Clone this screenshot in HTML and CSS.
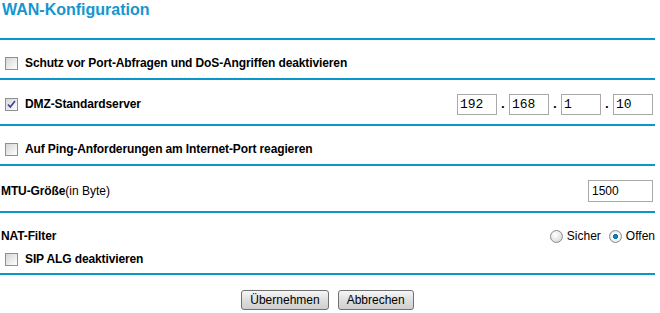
FILE: index.html
```html
<!DOCTYPE html>
<html>
<head>
<meta charset="utf-8">
<link rel="stylesheet" href="styles.css">
</head>
<body class="in_body">
  <div class="page">
    <div class="title">WAN-Konfiguration</div>

    <div class="row r1">
      <label class="lab"><span class="cb"></span>Schutz vor Port-Abfragen und DoS-Angriffen deaktivieren</label>
    </div>

    <div class="row r2">
      <label class="lab"><span class="cb on"><svg width="11" height="11" viewBox="0 0 11 11"><path d="M2 5.5 L4.3 8 L9 2" fill="none" stroke="#3b3f9a" stroke-width="1.6"/></svg></span>DMZ-Standardserver</label>
      <div class="ip">
        <input class="ipf" type="text" value="192"><span class="dot">.</span>
        <input class="ipf" type="text" value="168"><span class="dot">.</span>
        <input class="ipf" type="text" value="1"><span class="dot">.</span>
        <input class="ipf" type="text" value="10">
      </div>
    </div>

    <div class="row r3">
      <label class="lab"><span class="cb"></span>Auf Ping-Anforderungen am Internet-Port reagieren</label>
    </div>

    <div class="row r4">
      <div class="lab plain">MTU-Größe<span class="n">(in Byte)</span></div>
      <input class="mtu" type="text" value="1500">
    </div>

    <div class="row r5">
      <div class="nat">
        <div class="lab plain">NAT-Filter</div>
        <div class="radios">
          <span class="rd"></span><span class="rt">Sicher</span>
          <span class="rd on"></span><span class="rt">Offen</span>
        </div>
      </div>
      <label class="lab"><span class="cb"></span>SIP ALG deaktivieren</label>
    </div>

    <div class="btns">
      <button class="btn">Übernehmen</button>
      <button class="btn">Abbrechen</button>
    </div>
  </div>
</body>
</html>
```

FILE: styles.css
```css
.in_body
{
  margin:0;
  background-color:#fff;
  font-family:"Liberation Sans", Arial, sans-serif;
  color:#000;
}
.page
{
  width:655px;
}
.title
{
  height:38px;
  padding-left:2px;
  font-size:16px;
  font-weight:bold;
  color:#1596d0;
  line-height:20px;
  border-bottom:2px solid #0a97c9;
}
.row
{
  display:flex;
  align-items:center;
  justify-content:space-between;
  box-sizing:border-box;
  border-bottom:2px solid #0a97c9;
}
.r1 { height:40px; padding-top:8px; }
.r2 { height:46px; padding-top:4px; }
.r3 { height:40px; padding-top:8px; }
.r4 { height:47px; padding-top:5px; }
.r5
{
  height:62px;
  flex-direction:column;
  align-items:stretch;
  justify-content:flex-start;
  padding-top:15px;
}
.lab
{
  display:flex;
  align-items:center;
  font-size:12px;
  font-weight:bold;
  letter-spacing:-0.12px;
  padding-left:5px;
}
.plain
{
  padding-left:1px;
}
.n
{
  font-weight:normal;
  letter-spacing:0;
}
.cb
{
  display:inline-block;
  width:11px;
  height:11px;
  border:1px solid #8f8f8f;
  background:linear-gradient(135deg, #d6d6d6 0%, #f2f2f2 70%, #fff 100%);
  margin-right:7px;
}
.cb svg
{
  display:block;
}
.ip
{
  display:flex;
  align-items:center;
  margin-right:2px;
}
.ipf
{
  width:40px;
  height:21px;
  box-sizing:border-box;
  border:1px solid #a9a9a9;
  padding:0 2px;
  margin:0;
  font-family:"Liberation Mono", "Courier New", monospace;
  font-size:13px;
  color:#000;
}
.dot
{
  width:12px;
  text-align:center;
  font-family:"Liberation Mono", monospace;
  font-size:13px;
  font-weight:bold;
}
.mtu
{
  width:65px;
  height:22px;
  box-sizing:border-box;
  border:1px solid #a9a9a9;
  padding:0 3px;
  margin:0 2px 0 0;
  font-family:"Liberation Sans", Arial, sans-serif;
  font-size:12px;
}
.nat
{
  display:flex;
  justify-content:space-between;
  align-items:center;
  height:16px;
  margin-bottom:8px;
}
.radios
{
  display:flex;
  align-items:center;
  font-size:12px;
}
.rd
{
  display:inline-block;
  width:11px;
  height:11px;
  border-radius:50%;
  border:1px solid #8d8d8d;
  background:radial-gradient(circle at 40% 35%, #fff 0%, #e6e6e6 55%, #c8c8c8 100%);
  margin-right:4px;
}
.rd.on
{
  background:radial-gradient(circle at 50% 50%, #1b8fc6 0%, #0c6a9f 30%, #fff 34%, #e6e6e6 70%, #c8c8c8 100%);
}
.rt
{
  margin-right:8px;
}
.rt:last-child
{
  margin-right:0;
}
.btns
{
  display:flex;
  justify-content:center;
  gap:9px;
  padding-top:15px;
}
.btn
{
  height:20px;
  padding:0 8px;
  border:1px solid #707070;
  border-radius:3px;
  background:linear-gradient(#f6f6f6, #dedede 50%, #cfcfcf);
  font-family:"Liberation Sans", Arial, sans-serif;
  font-size:12px;
  color:#000;
}
```
